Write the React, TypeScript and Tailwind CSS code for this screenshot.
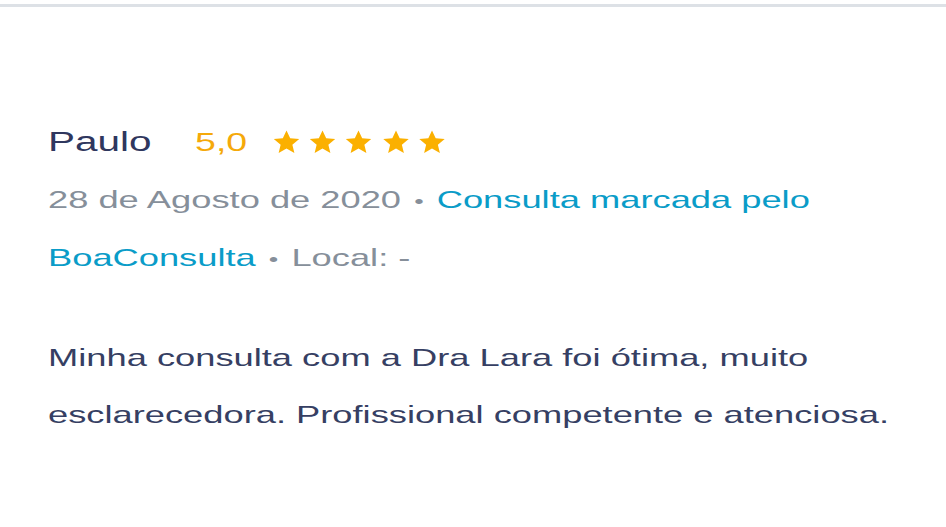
import React from 'react'

const review = {
  name: 'Paulo',
  rating: '5,0',
  stars: 5,
  date: '28 de Agosto de 2020',
  source: 'Consulta marcada pelo BoaConsulta',
  place: 'Local: -',
  text: 'Minha consulta com a Dra Lara foi ótima, muito esclarecedora. Profissional competente e atenciosa.',
}

function Star() {
  // drawn narrow on purpose: the card is stretched wide below
  return (
    <svg width="20" height="28" viewBox="0 0 24 24" preserveAspectRatio="none" className="shrink-0">
      <path
        d="M12 2.2l2.95 6.6 7.2.7-5.45 4.8 1.6 7.05L12 17.65 5.7 21.35l1.6-7.05L1.85 9.5l7.2-.7z"
        fill="#fbb000"
      />
    </svg>
  )
}

function Dot() {
  return <span className="mx-[2px] text-[18px]">•</span>
}

export default function App() {
  return (
    <div className="w-[946px] h-[527px] bg-white overflow-hidden" style={{ fontFamily: '"Liberation Sans", Arial, sans-serif' }}>
      <div className="pt-1">
        <div className="h-[3px] bg-[#dde1e6]" />
      </div>

      {/* the screenshot is stretched ~1.5x horizontally */}
      <div className="w-[631px] origin-top-left scale-x-150 pl-8 pr-4 pt-[117px]">
        <div className="flex items-center h-9">
          <span className="text-[27px] leading-9 text-[#2f375e]">{review.name}</span>
          <span className="ml-[29px] text-[25px] leading-9 text-[#f5a90a]">{review.rating}</span>
          <div className="ml-[16px] flex items-center gap-[4.3px]">
            {Array.from({ length: review.stars }).map((_, i) => <Star key={i} />)}
          </div>
        </div>

        <p className="mt-3 text-[24.2px] leading-[56px] text-[#868f9a]">
          {review.date} <Dot /> <span className="text-[#0a9cc8]">{review.source}</span> <Dot /> {review.place}
        </p>

        <p className="mt-[41px] text-[24.2px] leading-[57px] text-[#363f63]">
          {review.text}
        </p>
      </div>
    </div>
  )
}
